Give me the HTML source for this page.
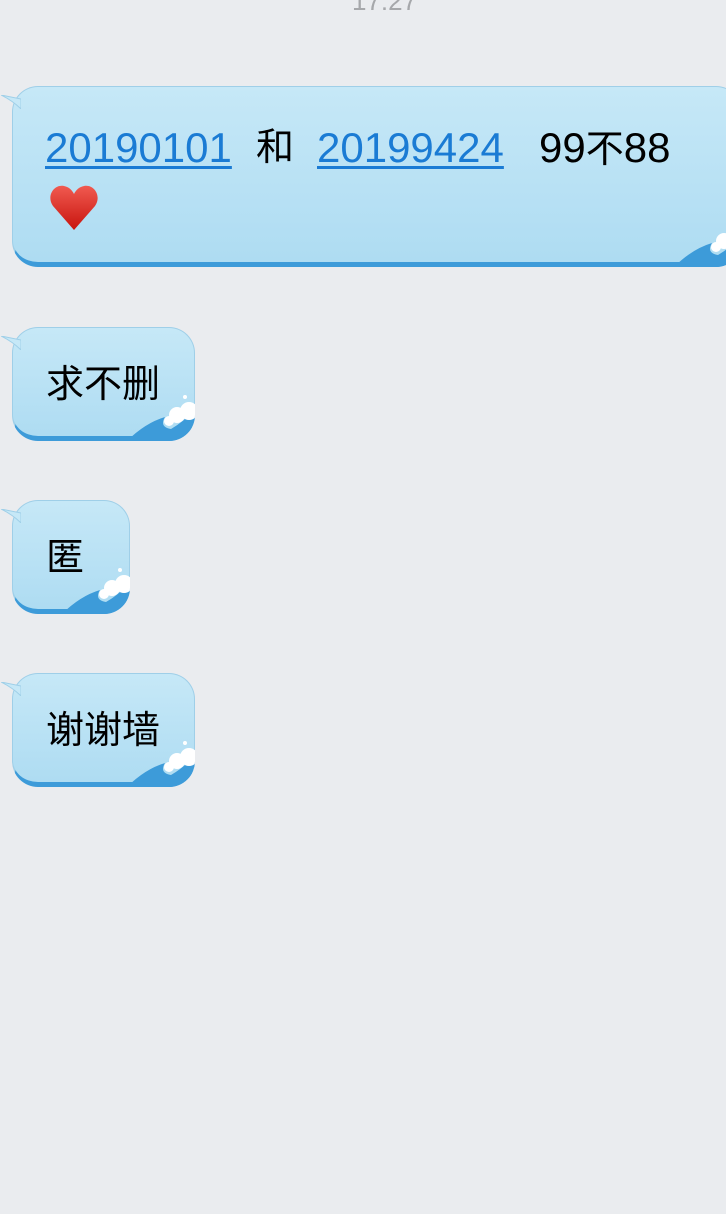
<!DOCTYPE html>
<html><head><meta charset="utf-8"><style>
body{margin:0;width:726px;height:1214px;background:#eaecef;position:relative;overflow:hidden;font-family:"Liberation Sans","Noto Sans CJK SC",sans-serif}
.t{position:absolute;top:-14px;left:352px;font-size:26px;color:#a6a8ab}
.b{position:absolute;left:12px;border-radius:26px;background:linear-gradient(#c6e8f7,#aedcf2);border:1px solid #9fcfe8;border-bottom:5px solid #3d9bd9;box-sizing:border-box;color:#000}
.tail{position:absolute;left:-12px;top:8px;width:20px;height:14px}
.in{position:absolute;left:-1px;top:-1px;right:-1px;bottom:-5px;border-radius:26px;overflow:hidden}
.w{position:absolute;right:-2px;bottom:0;width:70px;height:52px}
.s{position:absolute;white-space:nowrap;font-size:42px;line-height:1;top:40px}
a{color:#1a7bd4;text-decoration:underline;text-decoration-thickness:3px;text-underline-offset:4px}
.c{position:absolute;left:33px;top:38px;font-size:38px;line-height:1;white-space:nowrap}
</style></head><body>
<div class="t">17:27</div>

<div class="b" style="top:86px;width:730px;height:181px">
<svg class="tail" viewBox="0 0 20 14"><path d="M0 0 Q10 2 20 4 L20 14 Q12 6 0 0Z" fill="#c6e8f7" stroke="#9fcfe8" stroke-width="1"/></svg>
<div class="in"><svg class="w" viewBox="0 0 70 52"><path d="M0 52 Q18 34 38 28 Q32 38 44 40 Q58 32 70 18 V52Z" fill="#3d9bd9"/><circle cx="50" cy="26" r="8" fill="#fff"/><circle cx="62" cy="22" r="9" fill="#fff"/><circle cx="42" cy="32" r="5" fill="#fff"/><circle cx="58" cy="8" r="2" fill="#fff"/></svg></div>
<a class="s" style="left:32px">20190101</a>
<span class="s" style="left:243px;font-size:38px;top:42px">和</span>
<a class="s" style="left:304px">20199424</a>
<span class="s" style="left:526px">99<span style="font-size:38px">不</span>88</span>
<svg style="position:absolute;left:35px;top:95px" width="52" height="52" viewBox="0 0 52 52"><defs><linearGradient id="h" x1="0" y1="0" x2="0" y2="1"><stop offset="0" stop-color="#f05a50"/><stop offset="1" stop-color="#c8140e"/></linearGradient></defs><path d="M26 48 L5 24 C-2 14 6 2 16 4 C21 5 24 8 26 12 C28 8 31 5 36 4 C46 2 54 14 47 24Z" fill="url(#h)"/></svg>
</div>

<div class="b" style="top:327px;width:183px;height:114px">
<svg class="tail" viewBox="0 0 20 14"><path d="M0 0 Q10 2 20 4 L20 14 Q12 6 0 0Z" fill="#c6e8f7" stroke="#9fcfe8"/></svg>
<div class="in"><svg class="w" viewBox="0 0 70 52"><path d="M0 52 Q18 34 38 28 Q32 38 44 40 Q58 32 70 18 V52Z" fill="#3d9bd9"/><circle cx="50" cy="26" r="8" fill="#fff"/><circle cx="62" cy="22" r="9" fill="#fff"/><circle cx="42" cy="32" r="5" fill="#fff"/><circle cx="58" cy="8" r="2" fill="#fff"/></svg></div>
<div class="c">求不删</div></div>

<div class="b" style="top:500px;width:118px;height:114px">
<svg class="tail" viewBox="0 0 20 14"><path d="M0 0 Q10 2 20 4 L20 14 Q12 6 0 0Z" fill="#c6e8f7" stroke="#9fcfe8"/></svg>
<div class="in"><svg class="w" viewBox="0 0 70 52"><path d="M0 52 Q18 34 38 28 Q32 38 44 40 Q58 32 70 18 V52Z" fill="#3d9bd9"/><circle cx="50" cy="26" r="8" fill="#fff"/><circle cx="62" cy="22" r="9" fill="#fff"/><circle cx="42" cy="32" r="5" fill="#fff"/><circle cx="58" cy="8" r="2" fill="#fff"/></svg></div>
<div class="c">匿</div></div>

<div class="b" style="top:673px;width:183px;height:114px">
<svg class="tail" viewBox="0 0 20 14"><path d="M0 0 Q10 2 20 4 L20 14 Q12 6 0 0Z" fill="#c6e8f7" stroke="#9fcfe8"/></svg>
<div class="in"><svg class="w" viewBox="0 0 70 52"><path d="M0 52 Q18 34 38 28 Q32 38 44 40 Q58 32 70 18 V52Z" fill="#3d9bd9"/><circle cx="50" cy="26" r="8" fill="#fff"/><circle cx="62" cy="22" r="9" fill="#fff"/><circle cx="42" cy="32" r="5" fill="#fff"/><circle cx="58" cy="8" r="2" fill="#fff"/></svg></div>
<div class="c">谢谢墙</div></div>
</body></html>
